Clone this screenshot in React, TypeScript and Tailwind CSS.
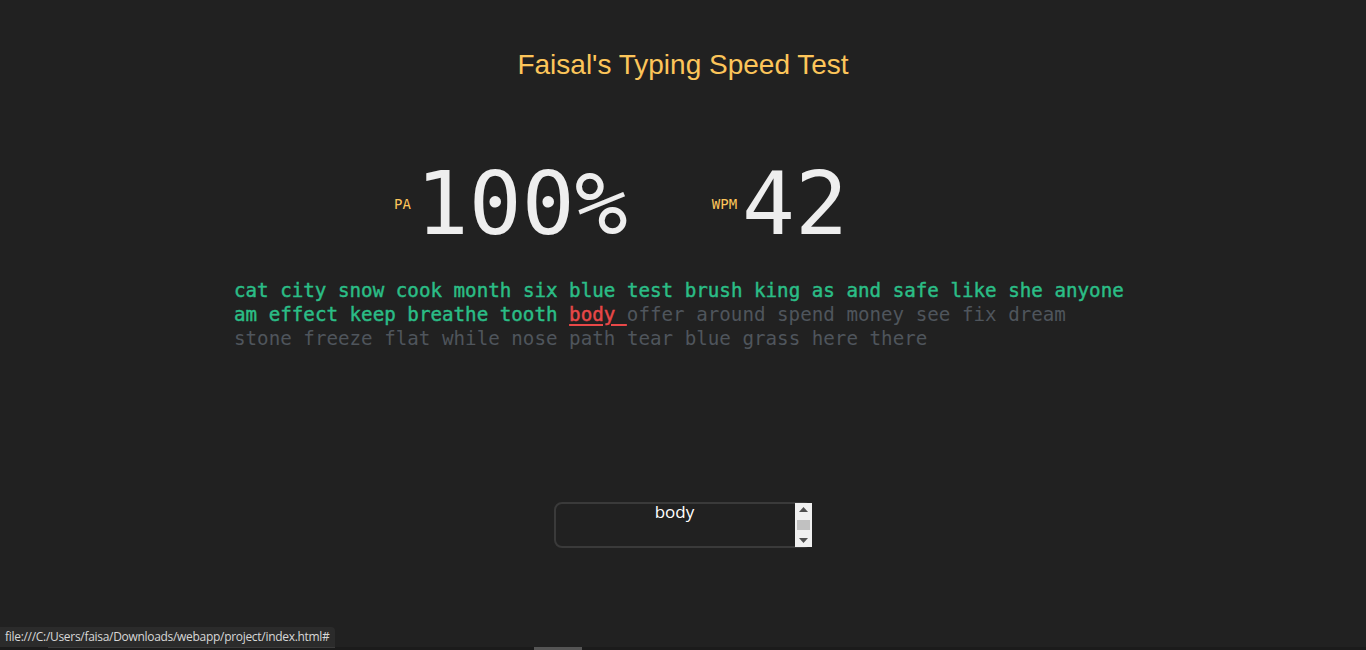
import React from "react";

const typed = "cat city snow cook month six blue test brush king as and safe like she anyone am effect keep breathe tooth".split(" ");
const rest = "offer around spend money see fix dream stone freeze flat while nose path tear blue grass here there".split(" ");

export default function App() {
  const mono = { fontFamily: '"DejaVu Sans Mono", "Liberation Mono", monospace' };
  return (
    <div className="relative h-[650px] w-full overflow-hidden bg-[#212121] flex flex-col items-center">
      <h1
        className="mt-[49px] text-[28px] leading-[32px] text-[#fcc55a]"
        style={{ fontFamily: '"Liberation Sans", Arial, sans-serif' }}
      >
        Faisal's Typing Speed Test
      </h1>

      <div className="w-[900px] mt-[79px] flex items-center pl-[161px]" style={mono}>
        <span className="text-[14px] text-[#fcc55a] mr-[5px]">PA</span>
        <span className="text-[88px] leading-[88px] text-[#eeeeee]">100%</span>
        <span className="text-[14px] text-[#fcc55a] ml-[84px] mr-[5px]">WPM</span>
        <span className="text-[88px] leading-[88px] text-[#eeeeee]">42</span>
      </div>

      <div className="w-[900px] mt-[31px] pl-[1px] text-[19.2px] leading-[24px]" style={mono}>
        {typed.map((w, i) => (
          <span key={"t" + i} className="text-[#2bbd86] [-webkit-text-stroke:0.45px_#2bbd86]">
            {w}{" "}
          </span>
        ))}
        <span className="text-[#e84848] [-webkit-text-stroke:0.45px_#e84848] underline underline-offset-[3px] decoration-2">body </span>
        {rest.map((w, i) => (
          <span key={"r" + i} className="text-[#4f555c]">
            {w}{" "}
          </span>
        ))}
      </div>

      <div className="relative mt-[151px] w-[258px] h-[46px] rounded-lg border-2 border-[#3a3a3a] flex">
        <div
          className="flex-1 pr-[17px] text-center text-[17px] leading-[20px] -mt-[2px] text-white"
          style={{ fontFamily: '"Open Sans", "Noto Sans", sans-serif' }}
        >
          body
        </div>
        <div className="absolute -right-[2px] top-[-1px] bottom-[-1px] w-[17px] bg-[#f0f0f0] flex flex-col items-center justify-between py-[4px]">
          <svg width="9" height="5" viewBox="0 0 9 5"><path d="M4.5 0 L9 5 L0 5 Z" fill="#505050" /></svg>
          <div className="w-[13px] h-[10px] bg-[#c1c1c1]" />
          <svg width="9" height="5" viewBox="0 0 9 5"><path d="M0 0 L9 0 L4.5 5 Z" fill="#505050" /></svg>
        </div>
      </div>

      <div
        className="absolute left-0 bottom-[3px] h-[20px] w-[335px] rounded-tr-[4px] bg-[#2b2b2b] pl-[5px] text-[12px] leading-[20px] text-[#d8d8d8]"
        style={{ fontFamily: '"Open Sans", "Noto Sans", sans-serif', letterSpacing: "-0.3px" }}
      >
        file:///C:/Users/faisa/Downloads/webapp/project/index.html#
      </div>
      <div className="absolute left-0 bottom-0 h-[3px] w-full bg-[#1b1b1b] flex">
        <div className="ml-[48px] w-[287px] h-[1px] bg-[#3a3a3a]" />
        <div className="ml-[199px] w-[48px] h-[3px] bg-[#555555]" />
      </div>
    </div>
  );
}
